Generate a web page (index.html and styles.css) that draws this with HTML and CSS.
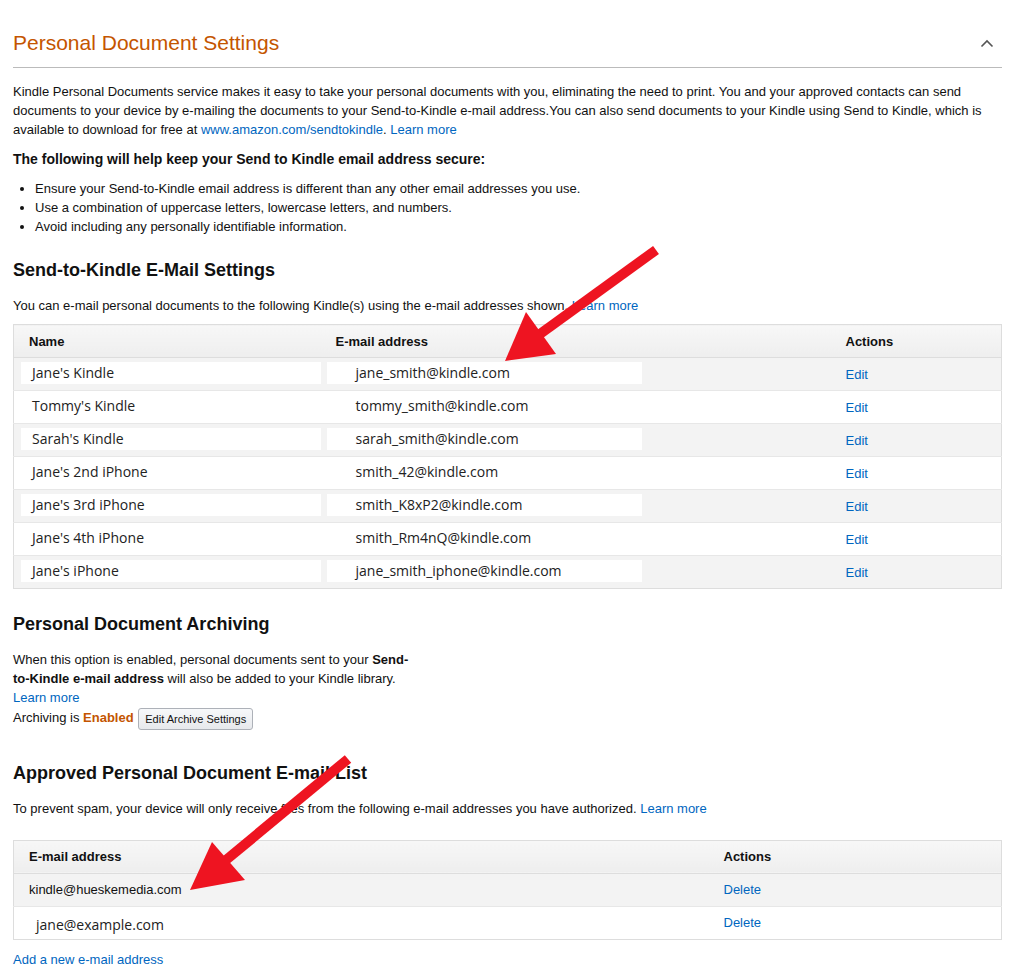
FILE: index.html
```html
<!DOCTYPE html>
<html lang="en">
<head>
    <meta charset="UTF-8">
    <title>Personal Document Settings</title>
    <link rel="stylesheet" href="styles.css">
</head>
<body>
    <div class="page">
        <!-- section header -->
        <div class="section-head">
            <h1>Personal Document Settings</h1>
            <svg class="caret" width="14" height="9" viewBox="0 0 14 9">
                <polyline points="1.5,7.5 7,2 12.5,7.5" fill="none" stroke="#555" stroke-width="1.6"/>
            </svg>
        </div>

        <p class="intro">Kindle Personal Documents service makes it easy to take your personal documents with you, eliminating the need to print. You and your approved contacts can send documents to your device by e-mailing the documents to your Send-to-Kindle e-mail address.You can also send documents to your Kindle using Send to Kindle, which is available to download for free at <a href="#">www.amazon.com/sendtokindle</a>. <a href="#">Learn more</a></p>

        <h3 class="tips-title">The following will help keep your Send to Kindle email address secure:</h3>
        <ul class="tips">
            <li>Ensure your Send-to-Kindle email address is different than any other email addresses you use.</li>
            <li>Use a combination of uppercase letters, lowercase letters, and numbers.</li>
            <li>Avoid including any personally identifiable information.</li>
        </ul>

        <h2>Send-to-Kindle E-Mail Settings</h2>
        <p class="lead">You can e-mail personal documents to the following Kindle(s) using the e-mail addresses shown. <a href="#">Learn more</a></p>

        <table class="grid devices">
            <thead>
                <tr><th class="c-name">Name</th><th class="c-mail">E-mail address</th><th>Actions</th></tr>
            </thead>
            <tbody>
                <tr><td class="c-name"><span class="box name-box">Jane's Kindle</span></td><td class="c-mail"><span class="box mail-box">jane_smith@kindle.com</span></td><td><a href="#">Edit</a></td></tr>
                <tr><td class="c-name"><span class="box name-box">Tommy's Kindle</span></td><td class="c-mail"><span class="box mail-box">tommy_smith@kindle.com</span></td><td><a href="#">Edit</a></td></tr>
                <tr><td class="c-name"><span class="box name-box">Sarah's Kindle</span></td><td class="c-mail"><span class="box mail-box">sarah_smith@kindle.com</span></td><td><a href="#">Edit</a></td></tr>
                <tr><td class="c-name"><span class="box name-box">Jane's 2nd iPhone</span></td><td class="c-mail"><span class="box mail-box">smith_42@kindle.com</span></td><td><a href="#">Edit</a></td></tr>
                <tr><td class="c-name"><span class="box name-box">Jane's 3rd iPhone</span></td><td class="c-mail"><span class="box mail-box">smith_K8xP2@kindle.com</span></td><td><a href="#">Edit</a></td></tr>
                <tr><td class="c-name"><span class="box name-box">Jane's 4th iPhone</span></td><td class="c-mail"><span class="box mail-box">smith_Rm4nQ@kindle.com</span></td><td><a href="#">Edit</a></td></tr>
                <tr><td class="c-name"><span class="box name-box">Jane's iPhone</span></td><td class="c-mail"><span class="box mail-box">jane_smith_iphone@kindle.com</span></td><td><a href="#">Edit</a></td></tr>
            </tbody>
        </table>

        <h2 class="archive-title">Personal Document Archiving</h2>
        <div class="archive">
            <p>When this option is enabled, personal documents sent to your <b>Send-to-Kindle e-mail address</b> will also be added to your Kindle library.</p>
            <a href="#">Learn more</a>
            <div class="archive-state">Archiving is <b class="enabled">Enabled</b> <button>Edit Archive Settings</button></div>
        </div>

        <h2 class="approved-title">Approved Personal Document E-mail List</h2>
        <p class="lead">To prevent spam, your device will only receive files from the following e-mail addresses you have authorized. <a href="#">Learn more</a></p>

        <table class="grid approved">
            <thead>
                <tr><th class="c-addr">E-mail address</th><th>Actions</th></tr>
            </thead>
            <tbody>
                <tr><td class="c-addr">kindle@hueskemedia.com</td><td><a href="#">Delete</a></td></tr>
                <tr><td class="c-addr"><span class="plain-box">jane@example.com</span></td><td><a href="#">Delete</a></td></tr>
            </tbody>
        </table>

        <a href="#" class="add-link">Add a new e-mail address</a>
    </div>

    <!-- annotation arrows drawn over the page -->
    <svg class="arrows" width="1013" height="977" viewBox="0 0 1013 977">
        <line x1="656" y1="250" x2="540" y2="334" stroke="#ee1421" stroke-width="10"/>
        <polygon points="505,361 526,312 556,354" fill="#ee1421"/>
        <line x1="348" y1="759" x2="226" y2="860" stroke="#ee1421" stroke-width="10"/>
        <polygon points="190,890 212,842 245,880" fill="#ee1421"/>
    </svg>
</body>
</html>
```

FILE: styles.css
```css
* {
    box-sizing: border-box;
    margin: 0;
    padding: 0;
}

body {
    font-family: "Liberation Sans", Arial, sans-serif;
    font-size: 13px;
    line-height: 19px;
    color: #111;
    background: #fff;
    position: relative;
}

a {
    color: #0066c0;
    text-decoration: none;
}

.page {
    padding: 0 11px 0 13px;
}

.section-head {
    display: flex;
    justify-content: space-between;
    align-items: center;
    padding: 30px 8px 11px 0;
    border-bottom: 1px solid #bbb;
}

.section-head h1 {
    font-size: 21px;
    line-height: 26px;
    font-weight: normal;
    color: #c45500;
}

.intro {
    margin-top: 14px;
}

.tips-title {
    font-size: 14px;
    font-weight: bold;
    margin-top: 11px;
}

.tips {
    margin-top: 10px;
    padding-left: 22px;
}

h2 {
    font-size: 18px;
    line-height: 24px;
    font-weight: bold;
    margin-top: 22px;
}

.lead {
    margin-top: 14px;
}

.grid {
    width: 100%;
    border-collapse: collapse;
    margin-top: 9px;
    border: 1px solid #ddd;
    table-layout: fixed;
}

.grid th {
    text-align: left;
    font-weight: bold;
    height: 33px;
    padding: 0 15px;
    background: linear-gradient(#f7f7f7, #eeeeee);
    border-bottom: 1px solid #ddd;
}

.grid td {
    height: 33px;
    padding: 0 15px;
    border-top: 1px solid #e7e7e7;
}

.grid tbody tr:nth-child(odd) td {
    background: #f3f3f3;
}

.devices .c-name {
    width: 307px;
}

.devices .c-mail {
    width: 510px;
}

.devices td.c-name,
.devices td.c-mail {
    padding: 0 0 2px;
}

.box {
    display: block;
    height: 22px;
    line-height: 22px;
    background: #fff;
    font-family: "Open Sans", sans-serif;
    font-size: 14px;
    color: #222;
}

.name-box {
    width: 301px;
    margin-left: 7px;
    padding-left: 11px;
}

.mail-box {
    width: 315px;
    margin-left: 6px;
    padding-left: 29px;
}

.archive-title {
    margin-top: 23px;
}

.archive {
    margin-top: 14px;
    width: 410px;
}

.archive a {
    display: block;
}

.archive-state {
    line-height: 21px;
}

.enabled {
    color: #c45500;
}

.archive-state button {
    font-family: "Liberation Sans", Arial, sans-serif;
    font-size: 11px;
    color: #111;
    height: 22px;
    padding: 0 6px;
    margin-left: 1px;
    border: 1px solid #adb1b8;
    border-radius: 3px;
    background: linear-gradient(#f7f8fa, #e7e9ec);
    vertical-align: middle;
}

.approved-title {
    margin-top: 31px;
}

.approved {
    margin-top: 22px;
}

.approved .c-addr {
    width: 695px;
}

.plain-box {
    font-family: "Open Sans", sans-serif;
    font-size: 14px;
    color: #222;
    padding-left: 7px;
    position: relative;
    top: 2px;
}

.add-link {
    display: block;
    margin-top: 10px;
}

.arrows {
    position: absolute;
    top: 0;
    left: 0;
    pointer-events: none;
}
```
